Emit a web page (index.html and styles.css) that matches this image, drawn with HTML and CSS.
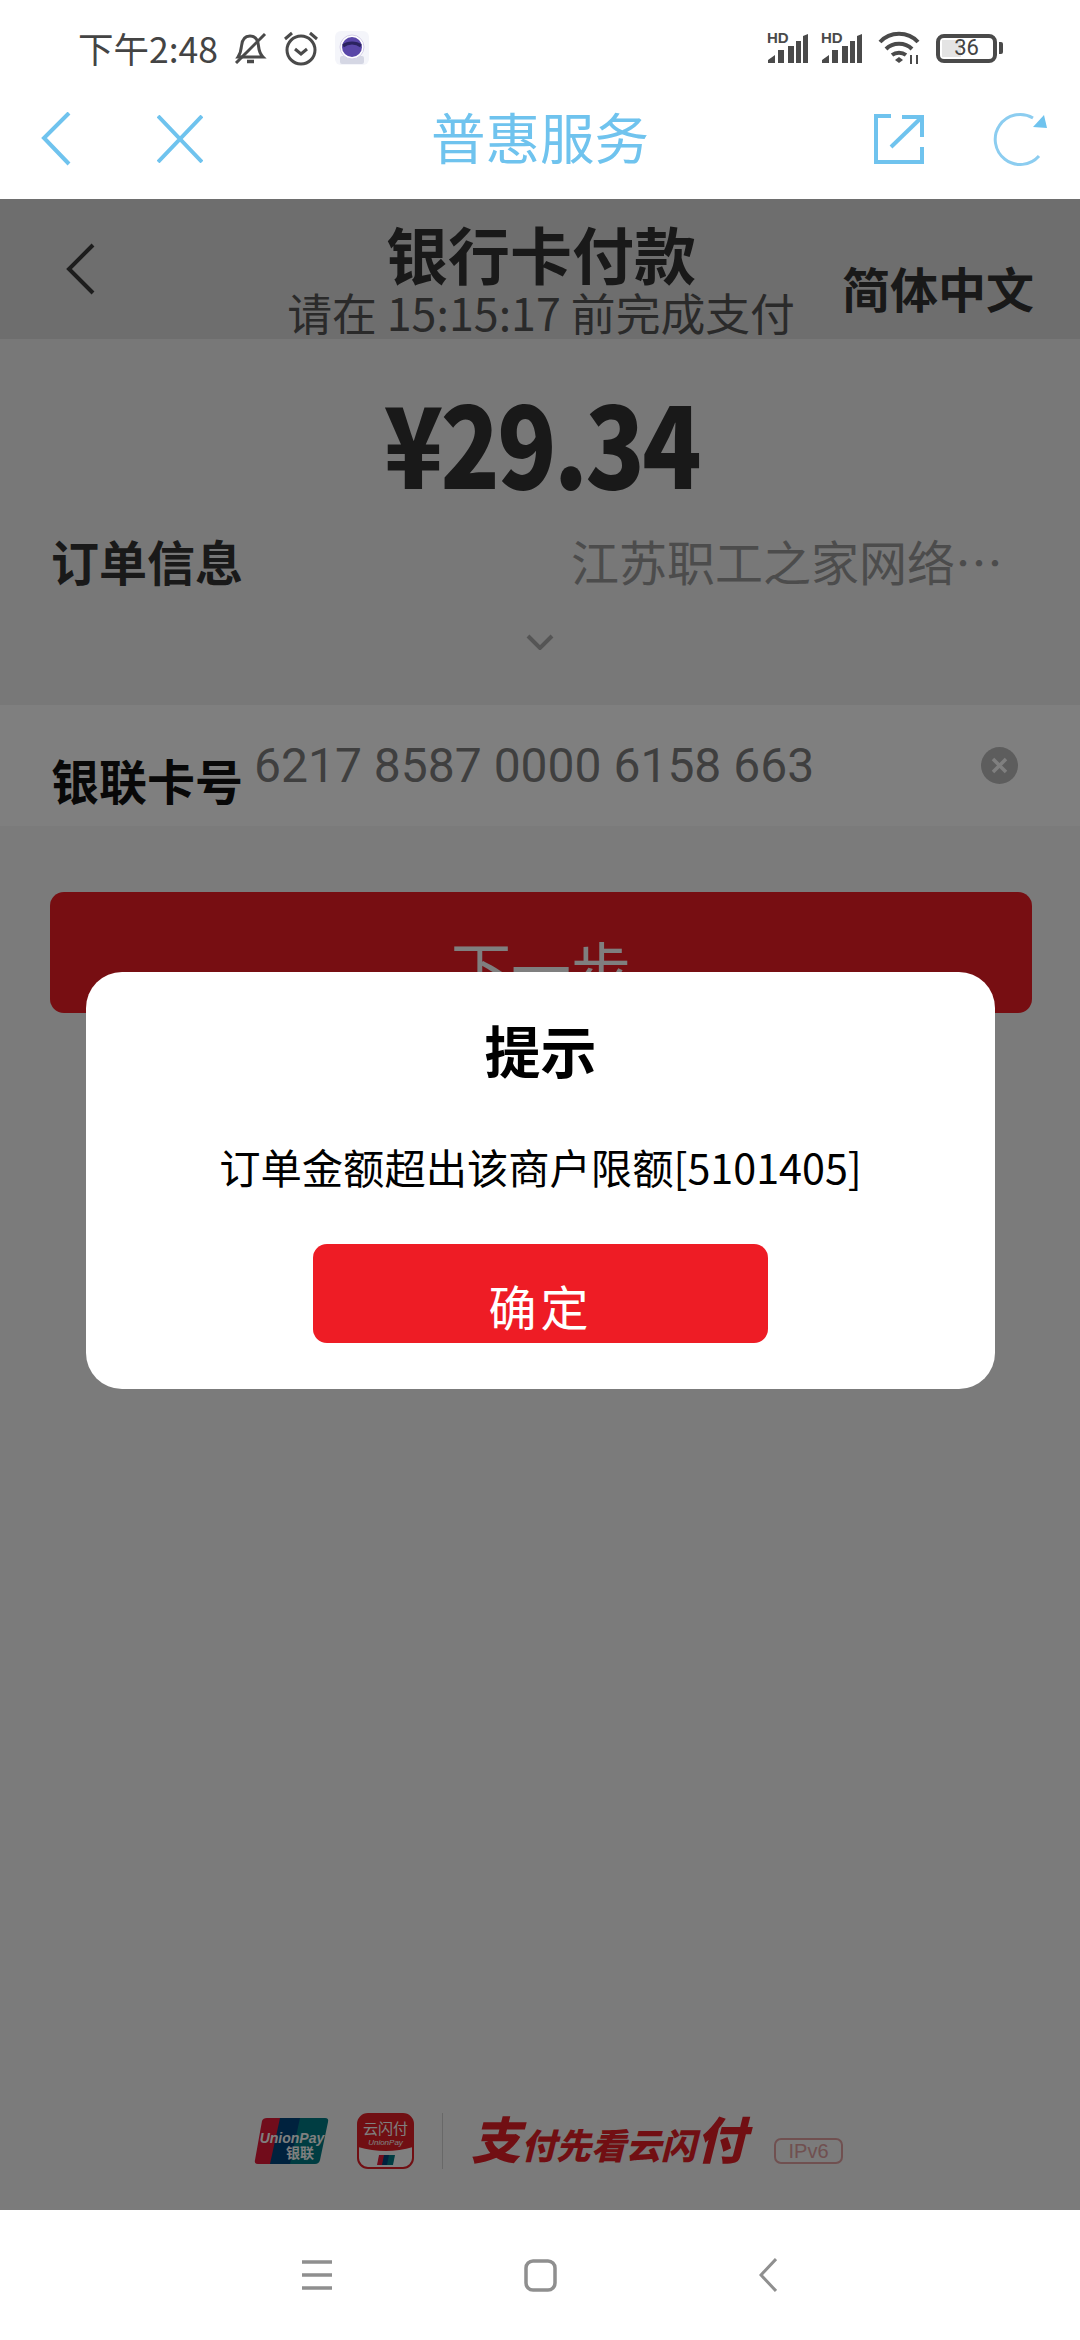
FILE: index.html

```html
<!DOCTYPE html>
<html lang="zh-CN">
<head>
  <meta charset="UTF-8" />
  <meta name="viewport" content="width=device-width, initial-scale=1.0"/>
  <title>普惠服务</title>
  <link rel="stylesheet" href="styles.css">
</head>
<body>
  <div class="phone">

    <div class="status-bar">
      <div class="status-left">
        <span class="time">下午2:48</span>
        <svg class="ic-bell" width="33" height="32" viewBox="0 0 33 32" fill="none" stroke="#4a4a4a" stroke-width="3">
          <path d="M4 25h25c-3-3-4-6-4.500-11C24 8 21 4 16 4c-5 0-8 4-8.500 10C7 19 6 22 4 25z"/>
          <path d="M2 31L31 2"/>
          <path d="M13 29.500h7" stroke-width="3.500"/>
        </svg>
        <svg class="ic-alarm" width="36" height="36" viewBox="0 0 36 36" fill="none" stroke="#4a4a4a" stroke-width="3">
          <circle cx="18" cy="20" r="14"/>
          <path d="M12 19l6 5 6-5"/>
          <path d="M2 9l7-6M34 9l-7-6"/>
        </svg>
        <svg class="ic-app" width="34" height="34" viewBox="0 0 34 34">
          <rect width="34" height="34" rx="6" fill="#f4f5fa"/>
          <rect x="5" y="25" width="24" height="8" rx="2" fill="#d5d7e4"/>
          <circle cx="17" cy="16" r="12" fill="#fff" stroke="#d4cfe8"/>
          <circle cx="17" cy="16" r="10" fill="#5a47a8"/>
          <path d="M8 15c5-4 13-4 18 0" fill="none" stroke="#2b2360" stroke-width="3"/>
        </svg>
      </div>
      <div class="status-right">
        <div class="signal">
          <span class="hd">HD</span>
          <svg width="41" height="30" viewBox="0 0 41 30" fill="#4a4a4a">
            <path d="M1 30v-3l7-5v8zM11 30V17h6v13zM21 30V13h6v17zM36 30V3l5-2v29zM29 30V8h5v22z"/>
          </svg>
        </div>
        <div class="signal">
          <span class="hd">HD</span>
          <svg width="41" height="30" viewBox="0 0 41 30" fill="#4a4a4a">
            <path d="M1 30v-3l7-5v8zM11 30V17h6v13zM21 30V13h6v17zM36 30V3l5-2v29zM29 30V8h5v22z"/>
          </svg>
        </div>
        <svg class="ic-wifi" width="42" height="34" viewBox="0 0 42 34" fill="none" stroke="#4a4a4a" stroke-width="4">
          <path d="M2 11C12 0 30 0 40 11"/>
          <path d="M8 18c7-7 19-7 26 0"/>
          <path d="M14 24c4-3 10-3 14 0"/>
          <path d="M17 29l4-3 4 3-4 3z" fill="#4a4a4a" stroke="none"/>
          <path d="M33 24v9M39 24v9" stroke-width="2"/>
        </svg>
        <div class="battery">
          <div class="battery-body">
            <div class="battery-fill"></div>
            <span class="battery-num">36</span>
          </div>
          <div class="battery-tip"></div>
        </div>
      </div>
    </div>

    <div class="app-bar">
      <div class="app-left">
        <svg width="30" height="54" viewBox="0 0 30 54" fill="none" stroke="#6fc3ee" stroke-width="4">
          <path d="M28 1L3 26l25 26"/>
        </svg>
        <svg width="46" height="48" viewBox="0 0 46 48" fill="none" stroke="#6fc3ee" stroke-width="4">
          <path d="M1 1l44 46M45 1L1 47"/>
        </svg>
      </div>
      <div class="app-title">普惠服务</div>
      <div class="app-right">
        <svg width="50" height="50" viewBox="0 0 50 50" fill="none" stroke="#6fc3ee" stroke-width="4">
          <path d="M17 2H2v46h46V33"/>
          <path d="M17 33L48 3"/>
          <path d="M28 3h20v20"/>
        </svg>
        <svg width="54" height="54" viewBox="0 0 54 54" fill="none" stroke="#8ccdf0" stroke-width="3">
          <path d="M46 44A25 25 0 1 1 40 6"/>
          <path d="M54 16L40 15 51 3z" fill="#6fc3ee" stroke="none"/>
        </svg>
      </div>
    </div>

    <div class="webview">
      <div class="pay-header">
        <div class="pay-back">
          <svg width="30" height="52" viewBox="0 0 30 52" fill="none" stroke="#3a3a3a" stroke-width="4">
            <path d="M28 2L4 26l24 24"/>
          </svg>
        </div>
        <div class="pay-heading">
          <div class="pay-title">银行卡付款</div>
          <div class="pay-sub">请在 15:15:17 前完成支付</div>
        </div>
        <div class="pay-lang">简体中文</div>
      </div>

      <div class="order">
        <div class="price">¥29.34</div>
        <div class="order-row">
          <span class="order-label">订单信息</span>
          <span class="order-value">江苏职工之家网络…</span>
        </div>
        <div class="order-more">
          <svg width="28" height="16" viewBox="0 0 28 16" fill="none" stroke="#aaa" stroke-width="4">
            <path d="M2 2l12 12L26 2"/>
          </svg>
        </div>
      </div>

      <div class="card-row">
        <span class="card-label">银联卡号</span>
        <span class="card-num">6217 8587 0000 6158 663</span>
        <svg class="card-clear" width="37" height="37" viewBox="0 0 37 37">
          <circle cx="18.500" cy="18.500" r="18.500" fill="#bbb"/>
          <path d="M12 12l13 13M25 12L12 25" stroke="#fff" stroke-width="3.500"/>
        </svg>
      </div>

      <div class="next-btn">下一步</div>

      <div class="brand">
        <svg class="logo-up" width="75" height="46" viewBox="0 0 75 46">
          <path d="M8 3Q9 0 13 0H32L22 46H4Q0 46 1 42z" fill="#e21836"/>
          <path d="M26 0H52L42 46H16z" fill="#00447c"/>
          <path d="M46 0H71Q75 0 74 4L66 42Q65 46 61 46H36z" fill="#007b84"/>
          <text x="38" y="25" class="logo-up-en">UnionPay</text>
          <text x="46" y="40" class="logo-up-zh">银联</text>
        </svg>
        <svg class="logo-ysf" width="57" height="56" viewBox="0 0 57 56">
          <rect x="1" y="1" width="55" height="54" rx="10" fill="#fff" stroke="#e21f26" stroke-width="2"/>
          <path d="M1 11a10 10 0 0 1 10-10h35a10 10 0 0 1 10 10v23q-27 8-55 0z" fill="#e21f26"/>
          <text x="28.500" y="21" class="logo-ysf-zh">云闪付</text>
          <text x="28.500" y="32" class="logo-ysf-en">UnionPay</text>
          <path d="M20 52l2-10h6l-2 10z" fill="#e21836"/>
          <path d="M25 52l2-10h6l-2 10z" fill="#00447c"/>
          <path d="M30 52l2-10h6l-2 10z" fill="#007b84"/>
        </svg>
        <div class="brand-line"></div>
        <div class="slogan"><span class="big">支</span>付先看云闪<span class="big">付</span></div>
        <div class="ipv6">IPv6</div>
      </div>

      <div class="overlay">
        <div class="dialog">
          <div class="dialog-title">提示</div>
          <div class="dialog-msg">订单金额超出该商户限额[5101405]</div>
          <div class="dialog-btn">确定</div>
        </div>
      </div>
    </div>

    <div class="nav-bar">
      <svg width="30" height="30" viewBox="0 0 30 30" fill="none" stroke="#8f8f8f" stroke-width="3.500">
        <path d="M0 2h30M0 15h30M0 28h30"/>
      </svg>
      <svg class="nav-home" width="33" height="33" viewBox="0 0 33 33" fill="none" stroke="#8f8f8f" stroke-width="3.500">
        <rect x="2" y="2" width="29" height="29" rx="7"/>
      </svg>
      <svg class="nav-back" width="18" height="34" viewBox="0 0 18 34" fill="none" stroke="#8f8f8f" stroke-width="3">
        <path d="M17 1L2 17l15 16"/>
      </svg>
    </div>

  </div>
</body>
</html>
```

FILE: styles.css

```css
html, body {
  margin: 0;
  padding: 0;
  background-color: #ffffff;
  font-family: "Noto Sans CJK SC", "Noto Sans", sans-serif;
}

.phone {
  width: 1080px;
  height: 2340px;
  display: flex;
  flex-direction: column;
  overflow: hidden;
}

/* status bar */
.status-bar {
  height: 88px;
  padding: 8px 77px 0 78px;
  box-sizing: border-box;
  display: flex;
  justify-content: space-between;
  align-items: center;
  color: #444;
}

.status-left {
  display: flex;
  align-items: center;
}

.time {
  font-size: 35.500px;
  line-height: 40px;
  width: 156px;
}

.ic-alarm {
  margin-left: 16px;
}

.ic-app {
  margin-left: 16px;
}

.status-right {
  display: flex;
  align-items: center;
}

.signal {
  position: relative;
  width: 41px;
  height: 30px;
  margin-right: 13px;
}

.hd {
  position: absolute;
  left: 0;
  top: -2px;
  font-family: "Liberation Sans", sans-serif;
  font-weight: bold;
  font-size: 15px;
  line-height: 14px;
  color: #4a4a4a;
}

.ic-wifi {
  margin-left: 3px;
}

.battery {
  display: flex;
  align-items: center;
  margin-left: 16px;
}

.battery-body {
  position: relative;
  width: 61px;
  height: 29px;
  box-sizing: border-box;
  border: 4px solid #4a4a4a;
  border-radius: 8px;
  display: flex;
  align-items: center;
  justify-content: center;
}

.battery-fill {
  position: absolute;
  left: 2px;
  top: 2px;
  bottom: 2px;
  width: 19px;
  background-color: #e4e4e4;
}

.battery-num {
  position: relative;
  font-family: "Roboto", sans-serif;
  font-size: 22px;
  line-height: 22px;
  color: #444;
}

.battery-tip {
  width: 4px;
  height: 12px;
  margin-left: 2px;
  background-color: #4a4a4a;
  border-radius: 0 2px 2px 0;
}

/* app bar */
.app-bar {
  height: 111px;
  padding: 0 33px 10px 33px;
  box-sizing: border-box;
  display: grid;
  grid-template-columns: 1fr auto 1fr;
  align-items: center;
}

.app-left {
  display: flex;
  align-items: center;
  gap: 86px;
  padding-left: 8px;
}

.app-title {
  font-size: 54.500px;
  line-height: 60px;
  padding-bottom: 5px;
  color: #6fc3ee;
}

.app-right {
  display: flex;
  align-items: center;
  justify-content: flex-end;
  gap: 69px;
}

/* web page */
.webview {
  position: relative;
  flex: 1;
  display: flex;
  flex-direction: column;
  background-color: #f6f6f6;
}

.pay-header {
  height: 140px;
  background-color: #dcdcdc;
  display: grid;
  grid-template-columns: 1fr auto 1fr;
}

.pay-back {
  padding: 44px 0 0 65px;
}

.pay-heading {
  padding: 22px 0 0 2px;
  text-align: center;
}

.pay-title {
  font-size: 62px;
  font-weight: bold;
  line-height: 64px;
  color: #333;
}

.pay-sub {
  font-size: 44.800px;
  line-height: 44px;
  margin-top: 5px;
  color: #555;
}

.pay-lang {
  padding: 60px 46px 0 0;
  text-align: right;
  font-size: 48px;
  font-weight: bold;
  line-height: 56px;
  color: #333;
}

.order {
  height: 366px;
  box-sizing: border-box;
  padding-top: 39px;
  background-color: #f0f0f0;
}

.price {
  padding-left: 3px;
  font-size: 112px;
  font-weight: 900;
  line-height: 124px;
  letter-spacing: -3px;
  text-align: center;
  color: #333;
  transform: scaleX(0.87);
}

.order-row {
  display: flex;
  justify-content: space-between;
  align-items: center;
  margin-top: 30px;
  padding: 0 77px 0 51px;
}

.order-label {
  font-size: 48px;
  font-weight: bold;
  line-height: 56px;
  color: #333;
}

.order-value {
  font-size: 48px;
  line-height: 56px;
  color: #999;
}

.order-more {
  display: flex;
  justify-content: center;
  margin-top: 46px;
}

.card-row {
  height: 121px;
  box-sizing: border-box;
  padding: 0 62px 0 51px;
  display: flex;
  align-items: flex-start;
  background-color: #ffffff;
}

.card-label {
  margin-top: 46px;
  width: 203px;
  font-size: 48px;
  font-weight: bold;
  line-height: 56px;
  color: #111;
}

.card-num {
  margin-top: 33px;
  font-family: "Roboto", sans-serif;
  font-size: 48px;
  line-height: 56px;
  color: #7f7f7f;
}

.card-clear {
  margin: 42px 0 0 auto;
}

.next-btn {
  height: 121px;
  margin: 66px 48px 0 50px;
  padding-top: 40px;
  box-sizing: border-box;
  background-color: #ee1c25;
  border-radius: 14px;
  text-align: center;
  font-size: 60px;
  line-height: 70px;
  color: #ffffff;
}

.brand {
  margin-top: auto;
  padding: 0 0 38px 254px;
  display: flex;
  align-items: center;
}

.logo-up-en {
  font-family: "Liberation Sans", sans-serif;
  font-size: 14px;
  font-weight: bold;
  font-style: italic;
  fill: #ffffff;
  text-anchor: middle;
}

.logo-up-zh {
  font-size: 14px;
  font-weight: bold;
  fill: #ffffff;
  text-anchor: middle;
}

.logo-ysf {
  margin-left: 28px;
}

.logo-ysf-zh {
  font-size: 15px;
  fill: #ffffff;
  text-anchor: middle;
}

.logo-ysf-en {
  font-family: "Liberation Sans", sans-serif;
  font-size: 8px;
  font-style: italic;
  fill: #ffffff;
  text-anchor: middle;
}

.brand-line {
  width: 1px;
  height: 56px;
  margin-left: 28px;
  background-color: #d0d0d0;
}

.slogan {
  margin-left: 28px;
  width: 281px;
  font-size: 35px;
  font-weight: 900;
  font-style: italic;
  line-height: 56px;
  white-space: nowrap;
  color: #e21f26;
}

.slogan .big {
  font-size: 50px;
}

.ipv6 {
  width: 69px;
  height: 26px;
  margin: 20px 0 0 22px;
  box-sizing: border-box;
  border: 2px solid #e0a0a0;
  border-radius: 7px;
  text-align: center;
  font-family: "Liberation Sans", sans-serif;
  font-size: 20px;
  line-height: 22px;
  color: #e0a0a0;
}

/* dialog */
.overlay {
  position: absolute;
  top: 0;
  right: 0;
  bottom: 0;
  left: 0;
  padding-top: 773px;
  box-sizing: border-box;
  background-color: rgba(0,0,0,0.5);
}

.dialog {
  width: 909px;
  height: 417px;
  margin-left: 86px;
  box-sizing: border-box;
  padding-top: 41px;
  background-color: #ffffff;
  border-radius: 36px;
  display: flex;
  flex-direction: column;
  align-items: center;
}

.dialog-title {
  font-size: 56px;
  font-weight: bold;
  line-height: 72px;
  color: #000;
}

.dialog-msg {
  margin-top: 53px;
  font-size: 41.300px;
  line-height: 56px;
  color: #000;
}

.dialog-btn {
  width: 455px;
  height: 99px;
  margin-top: 50px;
  box-sizing: border-box;
  padding-top: 33px;
  background-color: #ee1c25;
  border-radius: 14px;
  text-align: center;
  font-size: 48px;
  line-height: 56px;
  letter-spacing: 4px;
  color: #ffffff;
}

/* navigation */
.nav-bar {
  height: 130px;
  padding-left: 302px;
  box-sizing: border-box;
  display: flex;
  align-items: center;
  background-color: #ffffff;
}

.nav-home {
  margin-left: 192px;
}

.nav-back {
  margin-left: 202px;
}
```
